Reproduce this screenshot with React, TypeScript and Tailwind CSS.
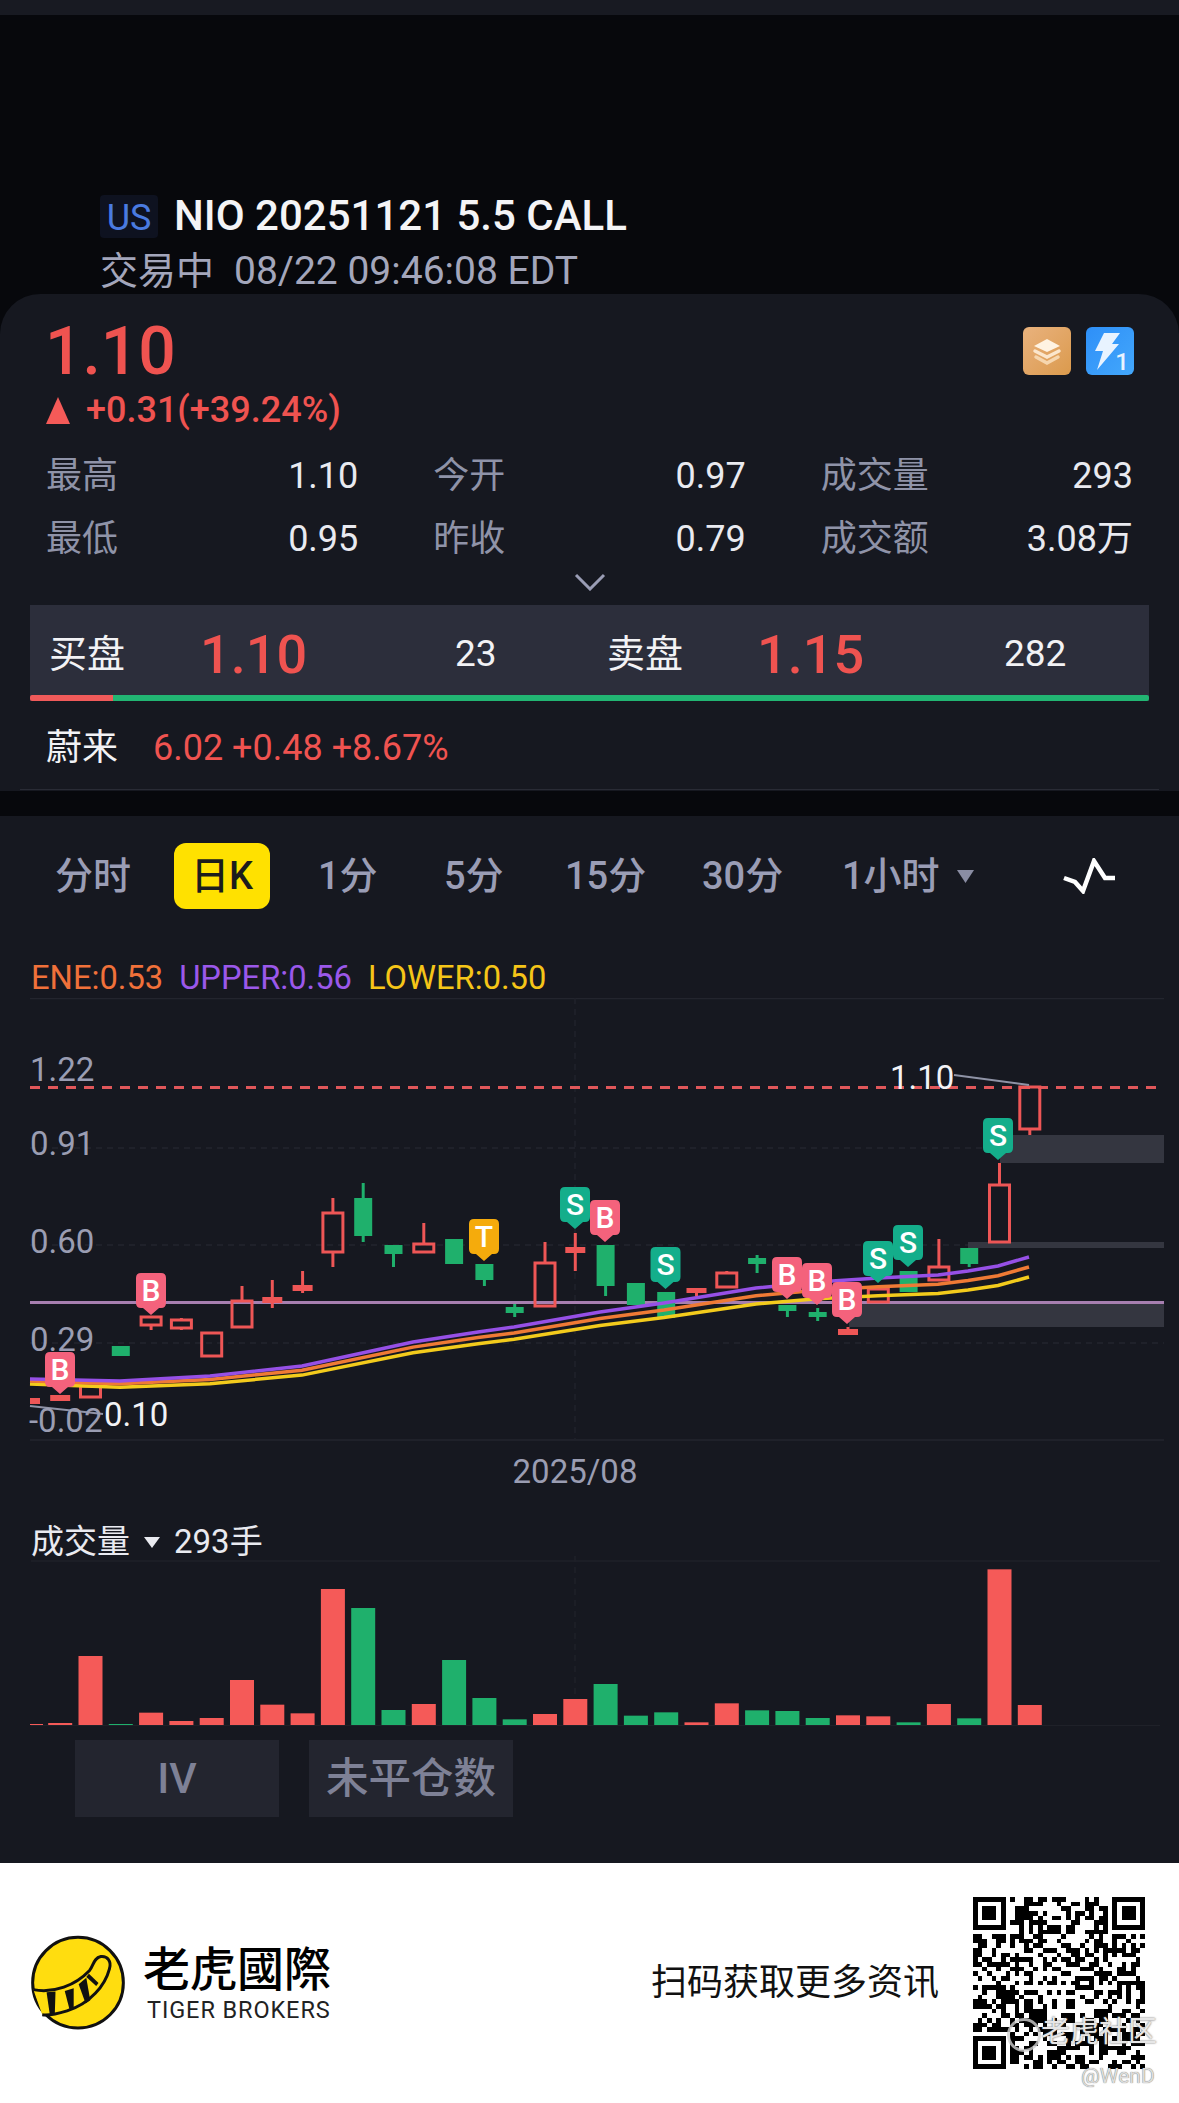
import React from "react";

type C = { i: number; t: number; b: number; wt?: number; wb?: number; k: "h" | "r" | "g" };
const X = (i: number) => 29.9 + 30.3 * i;
const RED = "#ee5656";
const GREEN = "#1fb06c";

const candles: C[] = [
  { i: 0, t: 1398, b: 1404, k: "r" },
  { i: 1, t: 1395, b: 1401, k: "r" },
  { i: 2, t: 1386, b: 1397, k: "h" },
  { i: 3, t: 1346, b: 1356, k: "g" },
  { i: 4, t: 1317, b: 1325, wb: 1330, k: "h" },
  { i: 5, t: 1320, b: 1328, wt: 1318, wb: 1330, k: "h" },
  { i: 6, t: 1333, b: 1356, k: "h" },
  { i: 7, t: 1301, b: 1327, wt: 1286, k: "h" },
  { i: 8, t: 1297, b: 1303, wt: 1280, wb: 1308, k: "r" },
  { i: 9, t: 1285, b: 1291, wt: 1271, wb: 1293, k: "r" },
  { i: 10, t: 1213, b: 1252, wt: 1198, wb: 1267, k: "h" },
  { i: 11, t: 1198, b: 1236, wt: 1183, wb: 1242, k: "g" },
  { i: 12, t: 1245, b: 1254, wb: 1267, k: "g" },
  { i: 13, t: 1244, b: 1252, wt: 1223, k: "h" },
  { i: 14, t: 1239, b: 1264, k: "g" },
  { i: 15, t: 1264, b: 1280, wb: 1286, k: "g" },
  { i: 16, t: 1307, b: 1313, wt: 1304, wb: 1317, k: "g" },
  { i: 17, t: 1263, b: 1306, wt: 1242, k: "h" },
  { i: 18, t: 1247, b: 1253, wt: 1233, wb: 1271, k: "r" },
  { i: 19, t: 1245, b: 1286, wb: 1296, k: "g" },
  { i: 20, t: 1283, b: 1305, k: "g" },
  { i: 21, t: 1292, b: 1318, k: "g" },
  { i: 22, t: 1288, b: 1293, wb: 1296, k: "r" },
  { i: 23, t: 1273, b: 1287, wt: 1271, k: "h" },
  { i: 24, t: 1258, b: 1264, wt: 1255, wb: 1273, k: "g" },
  { i: 25, t: 1305, b: 1311, wb: 1317, k: "g" },
  { i: 26, t: 1312, b: 1317, wt: 1308, wb: 1321, k: "g" },
  { i: 27, t: 1329, b: 1335, wt: 1327, k: "r" },
  { i: 28, t: 1289, b: 1302, k: "h" },
  { i: 29, t: 1271, b: 1292, k: "g" },
  { i: 30, t: 1267, b: 1280, wt: 1239, k: "h" },
  { i: 31, t: 1248, b: 1264, wb: 1267, k: "g" },
  { i: 32, t: 1185, b: 1242, wt: 1163, k: "h" },
  { i: 33, t: 1087, b: 1129, wb: 1135, k: "h" },
];

const markers: [string, number, number, string][] = [
  ["B", 60, 1352, "#f4627c"],
  ["B", 151, 1273, "#f4627c"],
  ["T", 484, 1219, "#f5ab0c"],
  ["S", 575, 1187, "#14ae8b"],
  ["B", 605, 1200, "#f4627c"],
  ["S", 665.5, 1247, "#14ae8b"],
  ["B", 787, 1257, "#f4627c"],
  ["B", 817, 1263, "#f4627c"],
  ["B", 847, 1282, "#f4627c"],
  ["S", 878, 1241, "#14ae8b"],
  ["S", 908, 1225, "#14ae8b"],
  ["S", 998, 1118, "#14ae8b"],
];

const purple: [number, number][] = [
  [30, 1379], [120, 1381], [210, 1376], [302, 1366], [413, 1342], [478, 1332], [514, 1327], [600, 1312],
  [664, 1303], [756, 1288], [817, 1282], [878, 1278], [938, 1275], [968, 1271], [998, 1266], [1029, 1257],
];
const line = (a: number, b: number) =>
  purple.map(([x, y]) => `${x},${(y + a + (b * (x - 30)) / 1000).toFixed(1)}`).join(" ");

const vols: [number, "r" | "g"][] = [
  [672, "r"], [669, "r"], [468, "r"], [672, "g"], [638, "r"], [663, "r"], [654, "r"], [540, "r"], [614, "r"], [640, "r"],
  [267, "r"], [324, "g"], [630, "g"], [612, "r"], [480, "g"], [594, "g"], [658, "g"], [642, "r"], [597, "r"], [552, "g"],
  [647, "g"], [637, "g"], [667, "r"], [610, "r"], [631, "g"], [633, "g"], [654, "g"], [646, "r"], [649, "r"], [667, "g"],
  [612, "r"], [655, "g"], [208, "r"], [615, "r"],
];

function qrPath() {
  const n = 37;
  let s = 20251121;
  const rnd = () => {
    s = (s * 1103515245 + 12345) & 0x7fffffff;
    return (s >> 12) % 100;
  };
  const inF = (x: number, y: number, ox: number, oy: number) => x >= ox - 1 && x <= ox + 7 && y >= oy - 1 && y <= oy + 7;
  const fin = (x: number, y: number, ox: number, oy: number) => {
    const a = x - ox, b = y - oy;
    if (a < 0 || a > 6 || b < 0 || b > 6) return false;
    return a === 0 || a === 6 || b === 0 || b === 6 || (a >= 2 && a <= 4 && b >= 2 && b <= 4);
  };
  let d = "";
  for (let y = 0; y < n; y++) {
    for (let x = 0; x < n; x++) {
      const v = rnd();
      let on = v < 50;
      const F = [[0, 0], [30, 0], [0, 30]];
      let done = false;
      for (const [ox, oy] of F) {
        if (inF(x, y, ox, oy)) {
          on = fin(x, y, ox, oy);
          done = true;
        }
      }
      if (!done && x >= 28 && x <= 32 && y >= 28 && y <= 32) {
        on = x === 28 || x === 32 || y === 28 || y === 32 || (x === 30 && y === 30);
      }
      if (on) d += `M${x} ${y}h1v1h-1z`;
    }
  }
  return d;
}

function Marker({ l, x, top, c }: { l: string; x: number; top: number; c: string }) {
  const w = 15, h = 35, r = 5;
  return (
    <g>
      <path
        d={`M${x - w + r} ${top}h${2 * w - 2 * r}q${r} 0 ${r} ${r}v${h - 2 * r}q0 ${r} ${-r} ${r}h-2l-8 7l-8 -7h-2q${-r} 0 ${-r} ${-r}v${-(h - 2 * r)}q0 ${-r} ${r} ${-r}z`}
        fill={c}
      />
      <text x={x} y={top + 27.5} textAnchor="middle" fontSize="30" fontWeight="500" fill="#fff">{l}</text>
    </g>
  );
}

function Chart() {
  return (
    <svg width="1179" height="452" viewBox="0 998 1179 452" className="block">
      <line x1="30" x2="1164" y1="998.5" y2="998.5" stroke="#23252e" strokeWidth="1.5" />
      {[1148, 1245, 1343].map((y) => (
        <line key={y} x1="30" x2="1164" y1={y} y2={y} stroke="#23252e" strokeWidth="1.5" strokeDasharray="6 5" />
      ))}
      <line x1="30" x2="1164" y1="1440" y2="1440" stroke="#23252e" strokeWidth="1.5" />
      <line x1="575" x2="575" y1="998" y2="1440" stroke="#20222b" strokeWidth="1.5" strokeDasharray="6 5" />
      <rect x="1000" y="1135" width="164" height="28" fill="#343640" />
      <rect x="968" y="1242" width="196" height="6" fill="#343640" />
      <rect x="849" y="1302" width="315" height="25" fill="#343640" />
      <line x1="30" x2="1164" y1="1302.5" y2="1302.5" stroke="#a77fb0" strokeWidth="3" />
      <line x1="30" x2="1157" y1="1087.5" y2="1087.5" stroke="#e0575a" strokeWidth="3" strokeDasharray="10 8" />

      {candles.map((c) => {
        const x = X(c.i);
        const col = c.k === "g" ? GREEN : RED;
        const hollow = c.k === "h";
        const w = c.k === "g" ? 18 : 20;
        const left = c.i === 0 ? 30 : x - w / 2;
        const right = c.i === 0 ? 40 : x + w / 2;
        return (
          <g key={c.i}>
            {c.wt !== undefined && <line x1={x} x2={x} y1={c.wt} y2={c.t} stroke={col} strokeWidth="3" />}
            {c.wb !== undefined && <line x1={x} x2={x} y1={c.b} y2={c.wb} stroke={col} strokeWidth="3" />}
            {hollow ? (
              <rect x={left} y={c.t} width={right - left} height={c.b - c.t} fill="none" stroke={col} strokeWidth="3" />
            ) : (
              <rect x={left} y={c.t} width={right - left} height={c.b - c.t} fill={col} />
            )}
          </g>
        );
      })}

      <polyline points={line(5, 15)} fill="none" stroke="#f3cb1c" strokeWidth="3.5" />
      <polyline points={line(2, 8)} fill="none" stroke="#ef7a35" strokeWidth="3.5" />
      <polyline points={line(0, 0)} fill="none" stroke="#9650e6" strokeWidth="3.5" />

      <line x1="30" y1="1406" x2="103" y2="1414" stroke="#8f93a6" strokeWidth="2" />
      <line x1="954" y1="1075" x2="1029" y2="1085" stroke="#8f93a6" strokeWidth="2" />

      {markers.map(([l, x, t, c], i) => (
        <Marker key={i} l={l} x={x} top={t} c={c} />
      ))}

      <g fontSize="33" fill="#9a9db2">
        <text x="30" y="1081">1.22</text>
        <text x="30" y="1155">0.91</text>
        <text x="30" y="1253">0.60</text>
        <text x="30" y="1351">0.29</text>
        <text x="29" y="1432">-0.02</text>
      </g>
      <text x="104" y="1426" fontSize="33" fill="#f2f2f5">0.10</text>
      <text x="890" y="1089" fontSize="33" fill="#f2f2f5">1.10</text>
    </svg>
  );
}

function Volume() {
  return (
    <svg width="1179" height="174" viewBox="0 1556 1179 174" className="block">
      <line x1="31" x2="1160" y1="1561" y2="1561" stroke="#1f2129" strokeWidth="1.5" />
      <line x1="575" x2="575" y1="1556" y2="1725" stroke="#1f2129" strokeWidth="1.5" strokeDasharray="6 5" />
      <line x1="31" x2="1160" y1="1725.5" y2="1725.5" stroke="#1f2129" strokeWidth="1" />
      {vols.map(([z, k], i) => {
        const top = 1500 + z / 3;
        const x = i === 0 ? 30 : X(i) - 12;
        const w = i === 0 ? 13 : 24;
        return <rect key={i} x={x} y={top} width={w} height={1725 - top} fill={k === "r" ? "#f55a58" : GREEN} />;
      })}
    </svg>
  );
}

function Stat({ l, v }: { l: string; v: string }) {
  return (
    <div className="flex h-[63px] items-center justify-between">
      <span className="text-[#8f93a8]">{l}</span>
      <span className="text-[#e9eaf0]">{v}</span>
    </div>
  );
}

function Tab({ w, children }: { w: string; children: React.ReactNode }) {
  return <div className={`${w} shrink-0`}>{children}</div>;
}

export default function App() {
  return (
    <div className="relative h-[2103px] w-[1179px] overflow-hidden bg-[#07080c] font-[Roboto,'Noto_Sans_CJK_SC',sans-serif]">
      <div className="h-[15px] bg-[#181a22]" />

      <div className="flex h-[279px] flex-col justify-end pl-[100px]">
        <div className="flex h-[56px] items-center">
          <span className="flex h-[43px] w-[58px] items-center justify-center rounded-[4px] bg-[#0e1220] pt-[4px] text-[36px] text-[#4a7be0]">US</span>
          <span className="ml-[16px] text-[42px] leading-none font-medium text-[#f4f4f6]">NIO 20251121 5.5 CALL</span>
        </div>
        <div className="mt-[-6px] flex h-[56px] items-center pt-[10px] text-[38px] text-[#a3a6bb]">
          <span>交易中</span>
          <span className="ml-[20px] text-[39px]">08/22 09:46:08 EDT</span>
        </div>
      </div>

      <section className="h-[497px] rounded-t-[40px] bg-[#161820]">
        <div className="flex h-[88px] items-end justify-between pr-[45px] pl-[45px]">
          <span className="mb-[-2px] h-[64px] text-[66px] leading-[64px] font-medium text-[#ef5350]">1.10</span>
          <div className="flex h-[55px] gap-[15px]">
            <div className="flex h-[48px] w-[48px] items-center justify-center rounded-[6px] bg-gradient-to-br from-[#e9b27d] to-[#db9a4c]">
              <svg width="30" height="30" viewBox="0 0 30 30">
                <path d="M15 3 L28 10 L15 16 L2 10 Z" fill="#fff3e2" />
                <path d="M3 15 L15 21 L27 15" fill="none" stroke="#fbe6cc" strokeWidth="3.5" strokeLinecap="round" />
                <path d="M4 21 L15 27 L26 21" fill="none" stroke="#f6d6ae" strokeWidth="3.5" strokeLinecap="round" />
              </svg>
            </div>
            <div className="relative flex h-[48px] w-[48px] items-center rounded-[6px] bg-gradient-to-br from-[#2e8ff8] to-[#43a7fb] pl-[8px]">
              <svg width="26" height="40" viewBox="0 0 26 40">
                <path d="M10 2 L26 2 L18 13 L25 13 L3 39 L9 20 L1 20 Z" fill="#e8f3ff" />
              </svg>
              <span className="absolute right-[5px] bottom-[1px] text-[24px] leading-[24px] font-medium text-[#e8f3ff]">1</span>
            </div>
          </div>
        </div>
        <div className="mt-[8px] flex h-[40px] items-center pl-[46px] text-[36px] font-medium text-[#ef5350]">
          <svg width="24" height="27" viewBox="0 0 24 27">
            <path d="M12 0 L24 27 L0 27 Z" fill="#f55a58" />
          </svg>
          <span className="ml-[16px]">+0.31(+39.24%)</span>
        </div>
        <div className="mt-[14px] grid grid-cols-3 gap-x-[75px] pr-[46px] pl-[46px] text-[36px]">
          <Stat l="最高" v="1.10" />
          <Stat l="今开" v="0.97" />
          <Stat l="成交量" v="293" />
          <Stat l="最低" v="0.95" />
          <Stat l="昨收" v="0.79" />
          <Stat l="成交额" v="3.08万" />
        </div>
        <div className="flex h-[35px] items-start justify-center pt-[3px]">
          <svg width="32" height="18" viewBox="0 0 32 18">
            <path d="M2 2 L16 16 L30 2" fill="none" stroke="#9a9db5" strokeWidth="3" />
          </svg>
        </div>
        <div className="mx-[30px] h-[96px] bg-[#2c2e3b]">
          <div className="flex h-[90px] items-center pt-[8px] pl-[19px] text-[37px] text-[#f2f2f5]">
            <span className="w-[151px] text-[38px]">买盘</span>
            <span className="w-[255px] text-[54px] font-medium text-[#ef5350]">1.10</span>
            <span className="w-[152px]">23</span>
            <span className="w-[150px] text-[38px]">卖盘</span>
            <span className="w-[247px] text-[54px] font-medium text-[#ef5350]">1.15</span>
            <span>282</span>
          </div>
          <div className="flex h-[6px] overflow-hidden rounded-[2px]">
            <div className="w-[83px] bg-[#f05a5a]" />
            <div className="flex-1 bg-[#22b573]" />
          </div>
        </div>
        <div className="mx-[20px] flex h-[89px] items-center border-b border-[#292b35] pt-[5px] pl-[26px] text-[36px]">
          <span className="w-[107px] text-[#f2f2f5]">蔚来</span>
          <span className="text-[#ef5350]">6.02 +0.48 +8.67%</span>
        </div>
      </section>

      <div className="h-[25px]" />

      <section className="h-[1047px] bg-[#161820]">
        <div className="flex h-[93px] items-end pl-[55px] text-[38px] font-medium text-[#9a9db5]">
          <div className="flex h-[66px] items-center">
            <Tab w="w-[119px]">分时</Tab>
            <Tab w="w-[96px] mr-[48px]">
              <div className="flex h-[66px] items-center justify-center rounded-[12px] bg-[#ffe100] text-[#1c1c1c]">日K</div>
            </Tab>
            <Tab w="w-[126px]">1分</Tab>
            <Tab w="w-[121px]">5分</Tab>
            <Tab w="w-[137px]">15分</Tab>
            <Tab w="w-[140px]">30分</Tab>
            <Tab w="w-[115px]">1小时</Tab>
            <Tab w="w-[106px]">
              <svg width="17" height="13" viewBox="0 0 17 13" className="block">
                <path d="M0 0 L17 0 L8.5 13 Z" fill="#8a8da3" />
              </svg>
            </Tab>
            <svg width="54" height="36" viewBox="1063 860 54 36">
              <polyline points="1064,880 1075,884 1083,893 1094,863 1105,880 1115,880" fill="none" stroke="#fff" strokeWidth="4.5" />
            </svg>
          </div>
        </div>
        <div className="mt-[50px] flex h-[39px] items-center gap-[16px] pl-[31px] text-[32.7px]">
          <span className="text-[#f0713a]">ENE:0.53</span>
          <span className="text-[#9b58ea]">UPPER:0.56</span>
          <span className="text-[#f5c518]">LOWER:0.50</span>
        </div>
        <Chart />
        <div className="flex h-[43px] items-center justify-center pr-[29px] text-[33px] leading-none text-[#9a9db2]">2025/08</div>
        <div className="flex h-[63px] items-center pt-[35px] pl-[31px] text-[33px] text-[#e9eaf0]">
          <span>成交量</span>
          <svg width="16" height="11" viewBox="0 0 16 11" className="mx-[14px]">
            <path d="M0 0 L16 0 L8 11 Z" fill="#e9eaf0" />
          </svg>
          <span>293手</span>
        </div>
        <Volume />
        <div className="mt-[10px] flex gap-[30px] pl-[75px] text-[42.5px] font-medium text-[#7e8196]">
          <div className="flex h-[77px] w-[204px] items-center justify-center bg-[#23252f]">IV</div>
          <div className="flex h-[77px] w-[204px] items-center justify-center bg-[#23252f]">未平仓数</div>
        </div>
      </section>

      <footer className="flex h-[240px] items-center justify-between bg-white pr-[34px] pl-[29px]">
        <div className="flex items-center">
          <svg width="98" height="98" viewBox="55 40 296 296">
            <circle cx="203" cy="187" r="137" fill="#ffdd0f" stroke="#111" strokeWidth="9" />
            <path d="M68 208 C130 220 195 195 238 150 C250 135 250 112 272 108 C292 106 305 122 298 145 C285 195 240 250 170 272 C135 283 110 286 95 284" fill="#ffdd0f" stroke="#111" strokeWidth="9" />
            <path d="M108 216 L135 214 L133 282 L118 284 Z" fill="#111" />
            <path d="M163 212 L190 204 L190 266 L178 270 Z" fill="#111" />
            <path d="M205 192 L228 172 L240 240 L226 250 Z" fill="#111" />
            <path d="M236 160 L265 188 L258 197 L228 170 Z" fill="#111" />
          </svg>
          <div className="mt-[-5px] ml-[16px] flex flex-col font-['Noto_Sans_CJK_TC',sans-serif] text-black">
            <span className="text-[47px] leading-[56px] font-medium">老虎國際</span>
            <span className="mt-[3px] ml-[4px] font-[Roboto,sans-serif] text-[23.5px] leading-[26px] tracking-[0.9px] text-[#222]">TIGER BROKERS</span>
          </div>
        </div>
        <div className="flex items-center gap-[34px]">
          <span className="text-[36px] text-[#111]">扫码获取更多资讯</span>
          <div className="relative h-[172px] w-[172px]">
            <svg width="172" height="172" viewBox="0 0 37 37" shapeRendering="crispEdges" className="block">
              <path d={qrPath()} fill="#000" />
            </svg>
            <div className="absolute top-[121px] left-[34px] h-[34px] w-[34px] rounded-full border-[3px] border-[#cfcfcf]/80" />
            <span className="absolute top-[118px] left-[68px] text-[29px] leading-[34px] whitespace-nowrap text-[#e6e6e6] [text-shadow:0_0_2px_#555]">老虎社区</span>
            <span className="absolute top-[168px] left-[108px] text-[21px] leading-[22px] text-[#dddddd] [text-shadow:0_0_1px_#555]">@WenD</span>
          </div>
        </div>
      </footer>
    </div>
  );
}
